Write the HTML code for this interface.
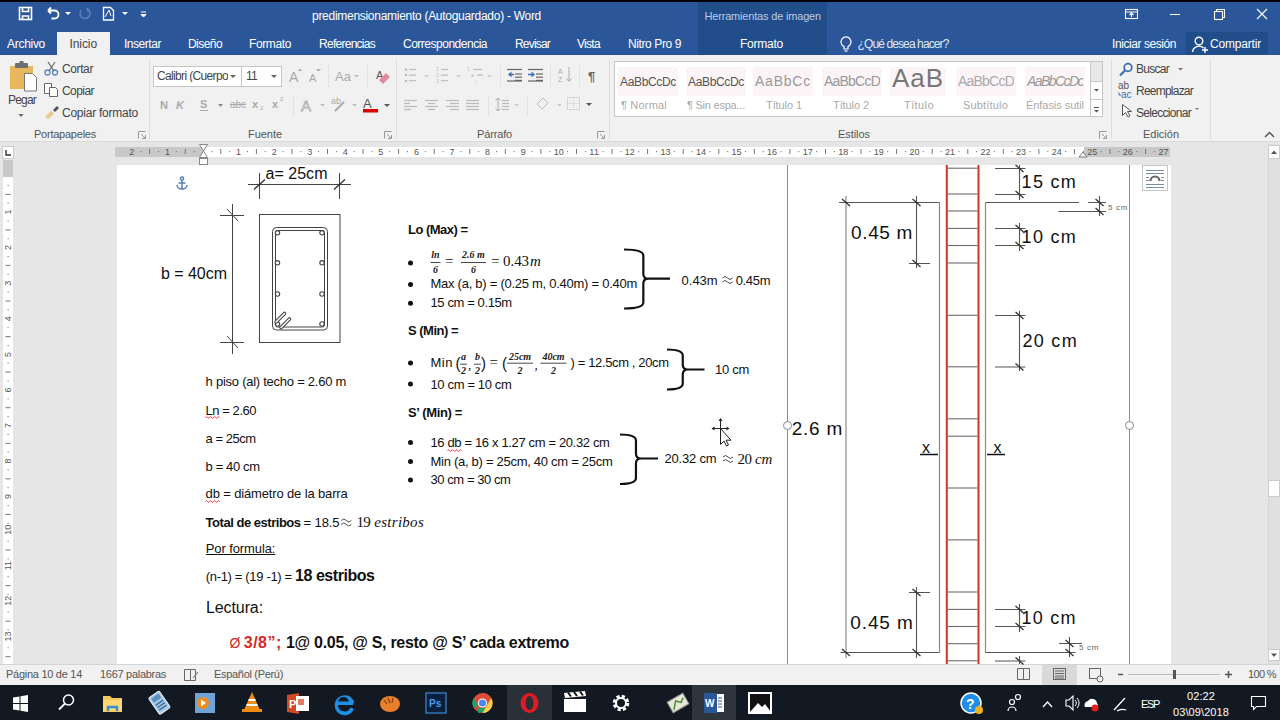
<!DOCTYPE html>
<html><head><meta charset="utf-8"><title>Word</title>
<style>
*{margin:0;padding:0;box-sizing:border-box}
html,body{width:1280px;height:720px;overflow:hidden;background:#e6e6e6;font-family:"Liberation Sans",sans-serif}
.a{position:absolute}
.t{position:absolute;white-space:pre}
svg{position:absolute;left:0;top:0}
</style></head><body>

<div class="a" style="left:0;top:0;width:1280px;height:2px;background:#000"></div>
<div class="a" style="left:0;top:2px;width:1280px;height:53px;background:#2b579a"></div>
<div class="a" style="left:698px;top:2px;width:129px;height:53px;background:#214d8b"></div>
<div class="a" style="left:1186px;top:32px;width:82px;height:23px;background:#214d8b"></div>
<div class="a" style="left:57px;top:32px;width:53px;height:23px;background:#f1f1f1"></div>
<div class="a" style="left:0;top:55px;width:1280px;height:87px;background:#f1f1f1;border-bottom:1px solid #dadada"></div>
<div class="a" style="left:117px;top:165px;width:1054px;height:499px;background:#fff"></div>
<div class="a" style="left:0;top:664px;width:1280px;height:21px;background:#f1f1f1;border-top:1px solid #d4d4d4"></div>
<div class="a" style="left:1042px;top:665px;width:35px;height:20px;background:#d9d9d9"></div>
<div class="a" style="left:0;top:685px;width:1280px;height:35px;background:#121922"></div>
<div class="a" style="left:507px;top:685px;width:45px;height:35px;background:#2a3038"></div>
<div class="a" style="left:692px;top:685px;width:44px;height:35px;background:#2f353d"></div>
<div class="a" style="left:149px;top:60px;width:1px;height:79px;background:#dcdcdc"></div>
<div class="a" style="left:396px;top:60px;width:1px;height:79px;background:#dcdcdc"></div>
<div class="a" style="left:608.5px;top:60px;width:1px;height:79px;background:#dcdcdc"></div>
<div class="a" style="left:1111px;top:60px;width:1px;height:79px;background:#dcdcdc"></div>
<div class="a" style="left:1210px;top:60px;width:1px;height:79px;background:#dcdcdc"></div>
<div class="a" style="left:153px;top:65.5px;width:89px;height:21px;background:#fff;border:1px solid #c6c6c6"></div>
<div class="a" style="left:241px;top:65.5px;width:41px;height:21px;background:#fff;border:1px solid #c6c6c6"></div>
<div class="a" style="left:328px;top:65px;width:1px;height:22px;background:#e2e2e2"></div>
<div class="a" style="left:367px;top:65px;width:1px;height:22px;background:#e2e2e2"></div>
<div class="a" style="left:293px;top:96px;width:1px;height:20px;background:#e2e2e2"></div>
<div class="a" style="left:500px;top:65px;width:1px;height:22px;background:#e2e2e2"></div>
<div class="a" style="left:549.5px;top:65px;width:1px;height:22px;background:#e2e2e2"></div>
<div class="a" style="left:579px;top:65px;width:1px;height:22px;background:#e2e2e2"></div>
<div class="a" style="left:488px;top:96px;width:1px;height:20px;background:#e2e2e2"></div>
<div class="a" style="left:527px;top:96px;width:1px;height:20px;background:#e2e2e2"></div>
<div class="a" style="left:614px;top:61px;width:489px;height:55.5px;background:#fff;border:1px solid #c6c6c6"></div>
<div class="a" style="left:1090px;top:61px;width:13px;height:55.5px;border:1px solid #c6c6c6;background:#fff"></div>
<div class="a" style="left:1091px;top:62px;width:11px;height:19px;background:#e8e8e8"></div>
<div class="a" style="left:1090px;top:80.5px;width:13px;height:1px;background:#c6c6c6"></div>
<div class="a" style="left:1090px;top:98.5px;width:13px;height:1px;background:#c6c6c6"></div>
<div class="a" style="left:617px;top:64px;width:66px;height:50px;background:#fff;"></div>
<div class="a" style="left:618px;top:67px;width:60px;height:29px;background:#fcf5f7"></div>
<div class="a" style="left:686px;top:67px;width:60px;height:29px;background:#fcf5f7"></div>
<div class="a" style="left:753px;top:67px;width:60px;height:29px;background:#fcf5f7"></div>
<div class="a" style="left:822px;top:67px;width:60px;height:29px;background:#fcf5f7"></div>
<div class="a" style="left:890px;top:67px;width:56px;height:29px;background:#fcf5f7"></div>
<div class="a" style="left:956px;top:67px;width:60px;height:29px;background:#fcf5f7"></div>
<div class="a" style="left:1025px;top:67px;width:60px;height:29px;background:#fcf5f7"></div>
<div class="a" style="left:115px;top:147px;width:1055px;height:10px;background:#fff"></div>
<div class="a" style="left:115px;top:147px;width:88px;height:10px;background:#c8c8c8"></div>
<div class="a" style="left:1084px;top:147px;width:86px;height:10px;background:#c8c8c8"></div>
<div class="a" style="left:2px;top:146px;width:12px;height:13px;background:#fff;border:1px solid #ccc"></div>
<div class="a" style="left:3px;top:160px;width:10px;height:504px;background:#fff"></div>
<div class="a" style="left:3px;top:160px;width:10px;height:17px;background:#c8c8c8"></div>
<div class="a" style="left:1268px;top:144px;width:12px;height:520px;background:#e0e0e0;border-left:1px solid #d6d6d6"></div>
<div class="a" style="left:1268px;top:145px;width:12px;height:14px;background:#fff;border:1px solid #ccc"></div>
<div class="a" style="left:1268px;top:480px;width:12px;height:17px;background:#fff;border:1px solid #ccc"></div>
<div class="a" style="left:1268px;top:649px;width:12px;height:12px;background:#fff;border:1px solid #ccc"></div>
<div class="a" style="left:1142px;top:165px;width:26px;height:26px;background:#fff;border:1px solid #c6c6c6"></div>
<svg width="1280" height="720" viewBox="0 0 1280 720">
<g fill="none" stroke="#fff" stroke-width="1.6"><rect x="19.5" y="7.5" width="12" height="12"/><path d="M22.5 7.5v4h6v-4M22.5 19.5v-3.5h6v3.5"/></g>
<path d="M48 10.5h6.5a4 4 0 0 1 0 8h-3M48 10.5l3-3M48 10.5l3 3" fill="none" stroke="#fff" stroke-width="1.8"/>
<path d="M65 12h6l-3 3z" fill="#fff"/>
<path d="M81.5 10a5 5 0 1 0 6.5-0.5" fill="none" stroke="#5a80b8" stroke-width="1.6"/><path d="M86 7.5l3.5 1.5-2 3z" fill="#5a80b8"/>
<path d="M103.5 7.5h7l3 3v9.5h-10z" fill="none" stroke="#fff" stroke-width="1.3"/><path d="M105 17l4-7 2 6" fill="none" stroke="#fff" stroke-width="1"/>
<path d="M122 12h6l-3 3z" fill="#fff"/>
<path d="M141 12h5M141 14.5h5l-2.5 2.5z" fill="#fff" stroke="#fff" stroke-width="1"/>
<g fill="none" stroke="#fff" stroke-width="1.1"><rect x="1125.5" y="9.5" width="12" height="9"/><path d="M1125.5 12h12M1131.5 17v-4M1129.5 15l2-2 2 2"/><path d="M1170 14.5h10"/><rect x="1214.5" y="11.5" width="8" height="8"/><path d="M1216.5 11.5v-2h8v8h-2"/><path d="M1257 9l10 10M1267 9l-10 10"/></g>
<g fill="none" stroke="#fff" stroke-width="1.2"><path d="M844 49v-2.5a5 5 0 1 1 4 0V49z"/><path d="M844.5 51h3"/></g>
<g fill="none" stroke="#fff" stroke-width="1.4"><circle cx="1199" cy="41" r="3.8"/><path d="M1192.5 52a6.5 6.5 0 0 1 11-4"/><path d="M1205 47v6M1202 50h6"/></g>
<g fill="none" stroke="#999" stroke-width="1"><path d="M138.5 138.5v-7h7"/><path d="M141 134l4 4M145.5 135v3.5h-3.5"/></g>
<g fill="none" stroke="#999" stroke-width="1"><path d="M384.5 138.5v-7h7"/><path d="M387 134l4 4M391.5 135v3.5h-3.5"/></g>
<g fill="none" stroke="#999" stroke-width="1"><path d="M597.5 138.5v-7h7"/><path d="M600 134l4 4M604.5 135v3.5h-3.5"/></g>
<g fill="none" stroke="#999" stroke-width="1"><path d="M1099.5 138.5v-7h7"/><path d="M1102 134l4 4M1106.5 135v3.5h-3.5"/></g>
<path d="M1265 137l4.5-4.5 4.5 4.5" fill="none" stroke="#555" stroke-width="1.5"/>
<rect x="10" y="66" width="23" height="23" fill="#e8b75c"/><rect x="15" y="63" width="13" height="5" rx="1" fill="#6f6f6f"/><rect x="19.5" y="61" width="4" height="3" fill="#6f6f6f"/>
<path d="M24.5 73.5h8l4 4v13.5h-12z" fill="#fff" stroke="#777" stroke-width="1"/>
<path d="M18.5 114h5l-2.5 3z" fill="#666"/>
<g fill="none" stroke="#5b87bd" stroke-width="1.3"><circle cx="47.5" cy="72.5" r="2.5"/><circle cx="55" cy="72.5" r="2.5"/></g><path d="M48 62l6 9M55 62l-6 9" stroke="#666" stroke-width="1.2"/>
<g fill="#fff" stroke="#666" stroke-width="1"><path d="M44.5 83.5h7v10h-7z"/><path d="M49.5 87.5h6l2 2v7h-8z"/></g>
<path d="M45 117l6-6 3 3-6 5z" fill="#e6cc88"/><path d="M53 110l4-4 2 2-4 4z" fill="#555"/>
<path d="M230 75h6l-3 3z M271 75h6l-3 3z" fill="#666"/>
<g fill="#aaa"><text x="289" y="82" font-family="Liberation Sans" font-size="14">A</text><text x="309" y="82" font-family="Liberation Sans" font-size="11">A</text><path d="M298 71l2-2.5 2 2.5z M316 69h5l-2.5 2.5z"/></g>
<text x="335" y="81" font-family="Liberation Sans" font-size="13" fill="#aaa">Aa</text><path d="M354 75h5l-2.5 2.5z" fill="#bbb"/>
<text x="376" y="79" font-family="Liberation Sans" font-size="11" fill="#555">A</text><path d="M379 80l7-7 4 4-7 7z" fill="#e48a9a"/>
<g font-family="Liberation Sans" font-weight="700" fill="#aaa"><text x="160" y="109" font-size="11">N</text><text x="176" y="109" font-size="11" font-style="italic">K</text><text x="200" y="108" font-size="11">S</text></g>
<path d="M200 110.5h8" stroke="#aaa" stroke-width="1"/><path d="M218 104h5l-2.5 3z" fill="#888"/>
<text x="230" y="108" font-family="Liberation Sans" font-size="10" fill="#aaa">abc</text><path d="M230 104.5h16" stroke="#aaa"/>
<text x="252" y="108" font-family="Liberation Sans" font-weight="700" font-size="11" fill="#aaa">x</text><text x="260" y="110" font-family="Liberation Sans" font-size="6" fill="#aaa">2</text>
<text x="272" y="108" font-family="Liberation Sans" font-weight="700" font-size="11" fill="#aaa">x</text><text x="280" y="101" font-family="Liberation Sans" font-size="6" fill="#aaa">2</text>
<text x="301" y="111" font-family="Liberation Sans" font-size="15" fill="none" stroke="#b0b0b0" stroke-width=".8">A</text><path d="M320 104h5l-2.5 2.5z" fill="#bbb"/>
<text x="331" y="104" font-family="Liberation Sans" font-size="9" fill="#aaa">ab</text><path d="M335 111l9-9" stroke="#aaa" stroke-width="2"/><path d="M352 104h5l-2.5 2.5z" fill="#bbb"/>
<text x="363" y="108" font-family="Liberation Sans" font-size="13" fill="#555">A</text><rect x="363" y="109" width="15" height="3.5" fill="#d00"/><path d="M384 104h6l-3 3z" fill="#555"/>
<g fill="#bbb"><circle cx="406" cy="69.5" r="1.3"/><circle cx="406" cy="75" r="1.3"/><circle cx="406" cy="81" r="1.3"/></g><path d="M409 69.5h7" stroke="#bbb" stroke-width="1.2"/><path d="M409 75.1h7" stroke="#bbb" stroke-width="1.2"/><path d="M409 80.7h7" stroke="#bbb" stroke-width="1.2"/>
<path d="M424 75h5l-2.5 2.5z" fill="#ccc"/>
<g font-family="Liberation Sans" font-size="5" fill="#bbb"><text x="436" y="71">1</text><text x="436" y="77">2</text><text x="436" y="82.5">3</text></g><path d="M441 69.5h7" stroke="#bbb" stroke-width="1.2"/><path d="M441 75.1h7" stroke="#bbb" stroke-width="1.2"/><path d="M441 80.7h7" stroke="#bbb" stroke-width="1.2"/>
<path d="M456 75h5l-2.5 2.5z" fill="#ccc"/>
<g font-family="Liberation Sans" font-size="5" fill="#bbb"><text x="467" y="71">1</text><text x="471" y="77">a</text><text x="475" y="82.5">i</text></g><path d="M473 69.5h9" stroke="#bbb" stroke-width="1.2"/><path d="M477 75.0h6" stroke="#bbb" stroke-width="1.2"/>
<path d="M487 75h5l-2.5 2.5z" fill="#ccc"/>
<path d="M507 69.5h15" stroke="#666" stroke-width="1.2"/><path d="M515 74.0h7" stroke="#666" stroke-width="1.2"/><path d="M515 77.2h7" stroke="#666" stroke-width="1.2"/><path d="M515 80.4h7" stroke="#666" stroke-width="1.2"/><path d="M507 81h15" stroke="#666" stroke-width="1.2"/><path d="M508 74.5l3.5-3v6z" fill="#3b6fb0"/><path d="M510 74.5h4" stroke="#3b6fb0" stroke-width="1.5"/>
<path d="M528 69.5h15" stroke="#666" stroke-width="1.2"/><path d="M536 74.0h7" stroke="#666" stroke-width="1.2"/><path d="M536 77.2h7" stroke="#666" stroke-width="1.2"/><path d="M536 80.4h7" stroke="#666" stroke-width="1.2"/><path d="M528 81h15" stroke="#666" stroke-width="1.2"/><path d="M535 74.5l-3.5-3v6z" fill="#3b6fb0"/><path d="M528 74.5h4" stroke="#3b6fb0" stroke-width="1.5"/>
<g font-family="Liberation Sans" font-size="7" fill="#aaa"><text x="558" y="74">A</text><text x="558" y="82">Z</text></g><path d="M569 67v14M566.5 78.5l2.5 3 2.5-3" fill="none" stroke="#aaa" stroke-width="1"/>
<text x="588" y="81" font-family="Liberation Sans" font-weight="700" font-size="13" fill="#666">¶</text>
<path d="M404 100.5h13" stroke="#bbb" stroke-width="1.2"/><path d="M404 103.5h6" stroke="#bbb" stroke-width="1.2"/><path d="M404 106.5h13" stroke="#bbb" stroke-width="1.2"/><path d="M404 109.5h7" stroke="#bbb" stroke-width="1.2"/>
<path d="M425 100.5h13" stroke="#bbb" stroke-width="1.2"/><path d="M428 103.5h7" stroke="#bbb" stroke-width="1.2"/><path d="M425 106.5h13" stroke="#bbb" stroke-width="1.2"/><path d="M428 109.5h7" stroke="#bbb" stroke-width="1.2"/>
<path d="M446 100.5h13" stroke="#bbb" stroke-width="1.2"/><path d="M450 103.5h9" stroke="#bbb" stroke-width="1.2"/><path d="M446 106.5h13" stroke="#bbb" stroke-width="1.2"/><path d="M450 109.5h9" stroke="#bbb" stroke-width="1.2"/>
<path d="M466 100.5h13" stroke="#bbb" stroke-width="1.2"/><path d="M466 103.5h13" stroke="#bbb" stroke-width="1.2"/><path d="M466 106.5h13" stroke="#bbb" stroke-width="1.2"/><path d="M466 109.5h13" stroke="#bbb" stroke-width="1.2"/>
<path d="M498 98v13M495.5 100.5l2.5-2.5 2.5 2.5M495.5 108.5l2.5 2.5 2.5-2.5" fill="none" stroke="#aaa" stroke-width="1"/><path d="M502 100.5h7" stroke="#bbb" stroke-width="1.2"/><path d="M502 103.5h7" stroke="#bbb" stroke-width="1.2"/><path d="M502 106.5h7" stroke="#bbb" stroke-width="1.2"/><path d="M502 109.5h7" stroke="#bbb" stroke-width="1.2"/>
<path d="M514 104h5l-2.5 2.5z" fill="#ccc"/>
<path d="M537 104l6-6 5 5-6 6z" fill="none" stroke="#bbb" stroke-width="1"/><path d="M557 104h5l-2.5 2.5z" fill="#ccc"/>
<rect x="567.5" y="97.5" width="12" height="12" fill="none" stroke="#bbb" stroke-dasharray="1 1"/><path d="M573.5 97.5v12M567.5 103.5h12" stroke="#ccc" stroke-dasharray="1 1"/><path d="M586 103h6l-3 3z" fill="#555"/>
<path d="M1094 89h5l-2.5 2.5z M1094 110h5l-2.5 2.5z" fill="#555"/><path d="M1094 107.5h5" stroke="#555"/>
<circle cx="1128" cy="67.5" r="3.8" fill="none" stroke="#3b6fb0" stroke-width="1.8"/><path d="M1125 70.5l-5 5" stroke="#3b6fb0" stroke-width="2.2"/>
<path d="M1178 68h5l-2.5 2.5z M1195 108h4l-2 2z" fill="#777"/>
<text x="1118" y="89" font-family="Liberation Sans" font-size="10" fill="#555">ab</text><text x="1121" y="97.5" font-family="Liberation Sans" font-size="10" fill="#3b6fb0">ac</text><path d="M1119 92.5v2.5h2" fill="none" stroke="#3b6fb0" stroke-width="1"/>
<path d="M1122.5 104.5v11l3-3 2.5 4.5 2-1-2.5-4.5h4z" fill="#fff" stroke="#555" stroke-width="1"/>
<rect x="140.3" y="151" width="1" height="1.2" fill="#777"/>
<path d="M149.6 149v5" stroke="#777" stroke-width="1"/>
<rect x="158.0" y="151" width="1" height="1.2" fill="#777"/>
<rect x="175.8" y="151" width="1" height="1.2" fill="#777"/>
<path d="M185.2 149v5" stroke="#777" stroke-width="1"/>
<rect x="193.6" y="151" width="1" height="1.2" fill="#777"/>
<rect x="211.4" y="151" width="1" height="1.2" fill="#777"/>
<path d="M220.8 149v5" stroke="#777" stroke-width="1"/>
<rect x="229.2" y="151" width="1" height="1.2" fill="#777"/>
<rect x="247.0" y="151" width="1" height="1.2" fill="#777"/>
<path d="M256.4 149v5" stroke="#777" stroke-width="1"/>
<rect x="264.7" y="151" width="1" height="1.2" fill="#777"/>
<rect x="282.5" y="151" width="1" height="1.2" fill="#777"/>
<path d="M291.9 149v5" stroke="#777" stroke-width="1"/>
<rect x="300.3" y="151" width="1" height="1.2" fill="#777"/>
<rect x="318.1" y="151" width="1" height="1.2" fill="#777"/>
<path d="M327.5 149v5" stroke="#777" stroke-width="1"/>
<rect x="335.9" y="151" width="1" height="1.2" fill="#777"/>
<rect x="353.7" y="151" width="1" height="1.2" fill="#777"/>
<path d="M363.1 149v5" stroke="#777" stroke-width="1"/>
<rect x="371.5" y="151" width="1" height="1.2" fill="#777"/>
<rect x="389.2" y="151" width="1" height="1.2" fill="#777"/>
<path d="M398.6 149v5" stroke="#777" stroke-width="1"/>
<rect x="407.0" y="151" width="1" height="1.2" fill="#777"/>
<rect x="424.8" y="151" width="1" height="1.2" fill="#777"/>
<path d="M434.2 149v5" stroke="#777" stroke-width="1"/>
<rect x="442.6" y="151" width="1" height="1.2" fill="#777"/>
<rect x="460.4" y="151" width="1" height="1.2" fill="#777"/>
<path d="M469.8 149v5" stroke="#777" stroke-width="1"/>
<rect x="478.2" y="151" width="1" height="1.2" fill="#777"/>
<rect x="496.0" y="151" width="1" height="1.2" fill="#777"/>
<path d="M505.3 149v5" stroke="#777" stroke-width="1"/>
<rect x="513.7" y="151" width="1" height="1.2" fill="#777"/>
<rect x="531.5" y="151" width="1" height="1.2" fill="#777"/>
<path d="M540.9 149v5" stroke="#777" stroke-width="1"/>
<rect x="549.3" y="151" width="1" height="1.2" fill="#777"/>
<rect x="567.1" y="151" width="1" height="1.2" fill="#777"/>
<path d="M576.5 149v5" stroke="#777" stroke-width="1"/>
<rect x="584.9" y="151" width="1" height="1.2" fill="#777"/>
<rect x="602.7" y="151" width="1" height="1.2" fill="#777"/>
<path d="M612.1 149v5" stroke="#777" stroke-width="1"/>
<rect x="620.4" y="151" width="1" height="1.2" fill="#777"/>
<rect x="638.2" y="151" width="1" height="1.2" fill="#777"/>
<path d="M647.6 149v5" stroke="#777" stroke-width="1"/>
<rect x="656.0" y="151" width="1" height="1.2" fill="#777"/>
<rect x="673.8" y="151" width="1" height="1.2" fill="#777"/>
<path d="M683.2 149v5" stroke="#777" stroke-width="1"/>
<rect x="691.6" y="151" width="1" height="1.2" fill="#777"/>
<rect x="709.4" y="151" width="1" height="1.2" fill="#777"/>
<path d="M718.8 149v5" stroke="#777" stroke-width="1"/>
<rect x="727.2" y="151" width="1" height="1.2" fill="#777"/>
<rect x="744.9" y="151" width="1" height="1.2" fill="#777"/>
<path d="M754.3 149v5" stroke="#777" stroke-width="1"/>
<rect x="762.7" y="151" width="1" height="1.2" fill="#777"/>
<rect x="780.5" y="151" width="1" height="1.2" fill="#777"/>
<path d="M789.9 149v5" stroke="#777" stroke-width="1"/>
<rect x="798.3" y="151" width="1" height="1.2" fill="#777"/>
<rect x="816.1" y="151" width="1" height="1.2" fill="#777"/>
<path d="M825.5 149v5" stroke="#777" stroke-width="1"/>
<rect x="833.9" y="151" width="1" height="1.2" fill="#777"/>
<rect x="851.7" y="151" width="1" height="1.2" fill="#777"/>
<path d="M861.0 149v5" stroke="#777" stroke-width="1"/>
<rect x="869.4" y="151" width="1" height="1.2" fill="#777"/>
<rect x="887.2" y="151" width="1" height="1.2" fill="#777"/>
<path d="M896.6 149v5" stroke="#777" stroke-width="1"/>
<rect x="905.0" y="151" width="1" height="1.2" fill="#777"/>
<rect x="922.8" y="151" width="1" height="1.2" fill="#777"/>
<path d="M932.2 149v5" stroke="#777" stroke-width="1"/>
<rect x="940.6" y="151" width="1" height="1.2" fill="#777"/>
<rect x="958.4" y="151" width="1" height="1.2" fill="#777"/>
<path d="M967.8 149v5" stroke="#777" stroke-width="1"/>
<rect x="976.1" y="151" width="1" height="1.2" fill="#777"/>
<rect x="993.9" y="151" width="1" height="1.2" fill="#777"/>
<path d="M1003.3 149v5" stroke="#777" stroke-width="1"/>
<rect x="1011.7" y="151" width="1" height="1.2" fill="#777"/>
<rect x="1029.5" y="151" width="1" height="1.2" fill="#777"/>
<path d="M1038.9 149v5" stroke="#777" stroke-width="1"/>
<rect x="1047.3" y="151" width="1" height="1.2" fill="#777"/>
<rect x="1065.1" y="151" width="1" height="1.2" fill="#777"/>
<path d="M1074.5 149v5" stroke="#777" stroke-width="1"/>
<rect x="1082.9" y="151" width="1" height="1.2" fill="#777"/>
<rect x="1100.6" y="151" width="1" height="1.2" fill="#777"/>
<path d="M1110.0 149v5" stroke="#777" stroke-width="1"/>
<rect x="1118.4" y="151" width="1" height="1.2" fill="#777"/>
<rect x="1136.2" y="151" width="1" height="1.2" fill="#777"/>
<path d="M1145.6 149v5" stroke="#777" stroke-width="1"/>
<rect x="1154.0" y="151" width="1" height="1.2" fill="#777"/>
<path d="M199.5 144.5h8l-4 6.5 4 6.5h-8l4-6.5z" fill="#fff" stroke="#888" stroke-width="1"/><rect x="199.5" y="158.5" width="8" height="6" fill="#fff" stroke="#888"/>
<path d="M1079 157l4-5 4 5z" fill="#fff" stroke="#777" stroke-width="1"/>
<path d="M6 150v5h5" fill="none" stroke="#333" stroke-width="1.4"/>
<rect x="7.5" y="184.9" width="1.2" height="1" fill="#777"/>
<path d="M5.5 194.3h5" stroke="#777" stroke-width="1"/>
<rect x="7.5" y="202.7" width="1.2" height="1" fill="#777"/>
<rect x="7.5" y="220.5" width="1.2" height="1" fill="#777"/>
<path d="M5.5 229.9h5" stroke="#777" stroke-width="1"/>
<rect x="7.5" y="238.2" width="1.2" height="1" fill="#777"/>
<text x="0" y="0" transform="translate(11 214.6) rotate(-90)" font-family="Liberation Sans" font-size="9" fill="#555">1</text>
<rect x="7.5" y="256.0" width="1.2" height="1" fill="#777"/>
<path d="M5.5 265.4h5" stroke="#777" stroke-width="1"/>
<rect x="7.5" y="273.8" width="1.2" height="1" fill="#777"/>
<text x="0" y="0" transform="translate(11 250.1) rotate(-90)" font-family="Liberation Sans" font-size="9" fill="#555">2</text>
<rect x="7.5" y="291.6" width="1.2" height="1" fill="#777"/>
<path d="M5.5 301.0h5" stroke="#777" stroke-width="1"/>
<rect x="7.5" y="309.4" width="1.2" height="1" fill="#777"/>
<text x="0" y="0" transform="translate(11 285.7) rotate(-90)" font-family="Liberation Sans" font-size="9" fill="#555">3</text>
<rect x="7.5" y="327.2" width="1.2" height="1" fill="#777"/>
<path d="M5.5 336.6h5" stroke="#777" stroke-width="1"/>
<rect x="7.5" y="345.0" width="1.2" height="1" fill="#777"/>
<text x="0" y="0" transform="translate(11 321.3) rotate(-90)" font-family="Liberation Sans" font-size="9" fill="#555">4</text>
<rect x="7.5" y="362.7" width="1.2" height="1" fill="#777"/>
<path d="M5.5 372.1h5" stroke="#777" stroke-width="1"/>
<rect x="7.5" y="380.5" width="1.2" height="1" fill="#777"/>
<text x="0" y="0" transform="translate(11 356.9) rotate(-90)" font-family="Liberation Sans" font-size="9" fill="#555">5</text>
<rect x="7.5" y="398.3" width="1.2" height="1" fill="#777"/>
<path d="M5.5 407.7h5" stroke="#777" stroke-width="1"/>
<rect x="7.5" y="416.1" width="1.2" height="1" fill="#777"/>
<text x="0" y="0" transform="translate(11 392.4) rotate(-90)" font-family="Liberation Sans" font-size="9" fill="#555">6</text>
<rect x="7.5" y="433.9" width="1.2" height="1" fill="#777"/>
<path d="M5.5 443.3h5" stroke="#777" stroke-width="1"/>
<rect x="7.5" y="451.7" width="1.2" height="1" fill="#777"/>
<text x="0" y="0" transform="translate(11 428.0) rotate(-90)" font-family="Liberation Sans" font-size="9" fill="#555">7</text>
<rect x="7.5" y="469.5" width="1.2" height="1" fill="#777"/>
<path d="M5.5 478.8h5" stroke="#777" stroke-width="1"/>
<rect x="7.5" y="487.2" width="1.2" height="1" fill="#777"/>
<text x="0" y="0" transform="translate(11 463.6) rotate(-90)" font-family="Liberation Sans" font-size="9" fill="#555">8</text>
<rect x="7.5" y="505.0" width="1.2" height="1" fill="#777"/>
<path d="M5.5 514.4h5" stroke="#777" stroke-width="1"/>
<rect x="7.5" y="522.8" width="1.2" height="1" fill="#777"/>
<text x="0" y="0" transform="translate(11 499.1) rotate(-90)" font-family="Liberation Sans" font-size="9" fill="#555">9</text>
<rect x="7.5" y="540.6" width="1.2" height="1" fill="#777"/>
<path d="M5.5 550.0h5" stroke="#777" stroke-width="1"/>
<rect x="7.5" y="558.4" width="1.2" height="1" fill="#777"/>
<text x="0" y="0" transform="translate(11 534.7) rotate(-90)" font-family="Liberation Sans" font-size="9" fill="#555">10</text>
<rect x="7.5" y="576.2" width="1.2" height="1" fill="#777"/>
<path d="M5.5 585.6h5" stroke="#777" stroke-width="1"/>
<rect x="7.5" y="593.9" width="1.2" height="1" fill="#777"/>
<text x="0" y="0" transform="translate(11 570.3) rotate(-90)" font-family="Liberation Sans" font-size="9" fill="#555">11</text>
<rect x="7.5" y="611.7" width="1.2" height="1" fill="#777"/>
<path d="M5.5 621.1h5" stroke="#777" stroke-width="1"/>
<rect x="7.5" y="629.5" width="1.2" height="1" fill="#777"/>
<text x="0" y="0" transform="translate(11 605.8) rotate(-90)" font-family="Liberation Sans" font-size="9" fill="#555">12</text>
<rect x="7.5" y="647.3" width="1.2" height="1" fill="#777"/>
<path d="M5.5 656.7h5" stroke="#777" stroke-width="1"/>
<text x="0" y="0" transform="translate(11 641.4) rotate(-90)" font-family="Liberation Sans" font-size="9" fill="#555">13</text>
<path d="M1271 154l3-3.5 3 3.5z M1271 653.5h6l-3 3.5z" fill="#555"/>
<path d="M184.5 669.5v11h6v-11zM190.5 669.5h5v11h-5" fill="none" stroke="#666" stroke-width="1"/><path d="M193 678l5-6" stroke="#666"/>
<g fill="none" stroke="#666" stroke-width="1"><path d="M1017.5 668.5h6v11h-6zM1023.5 668.5h6v11h-6z"/></g>
<g fill="none" stroke="#666" stroke-width="1"><rect x="1053.5" y="668.5" width="12" height="11"/><path d="M1055 671h9M1055 673.5h9M1055 676h9M1055 678h9"/></g>
<g fill="none" stroke="#666" stroke-width="1"><rect x="1089.5" y="668.5" width="11" height="10"/><circle cx="1100" cy="679" r="3" fill="#f1f1f1"/></g>
<path d="M1118 674.5h5M1225 674.5h7M1228.5 671v7" stroke="#555" stroke-width="1.5"/><path d="M1128 674.5h92" stroke="#bbb" stroke-width="1"/><rect x="1173" y="670" width="3" height="9" fill="#555"/>
<g fill="#fff"><path d="M13 697.5l6.5-1v6.5H13z M20.5 696.3L28 695v8h-7.5z M13 704h6.5v6.5L13 709.5z M20.5 704H28v8l-7.5-1.2z"/></g>
<circle cx="68.5" cy="700" r="5" fill="none" stroke="#fff" stroke-width="1.5"/><path d="M65 703.5l-6 6" stroke="#fff" stroke-width="1.8"/>
<path d="M103 696h7l2 2h10v14h-19z" fill="#f5c85a"/><rect x="103" y="700" width="19" height="11" fill="#ffd874"/><path d="M108 711v-4h9v4" fill="none" stroke="#3390d8" stroke-width="2.5"/>
<g transform="rotate(-35 159 703)"><rect x="153" y="693" width="13" height="20" rx="1.5" fill="#a9c9e6" stroke="#e6f0fa"/><rect x="155" y="695" width="9" height="5" fill="#5b8fbf"/><path d="M155 703h9M155 706h9M155 709h9" stroke="#3d6d9a" stroke-width="1.5"/></g>
<rect x="195" y="693" width="20" height="20" fill="#6fa3d6"/><circle cx="203" cy="703" r="6" fill="#f08c1e"/><path d="M201 699.5v7l5-3.5z" fill="#fff"/>
<path d="M252 692l-8 18h16z" fill="#f08c10"/><path d="M248.5 700h7M246.5 705h11" stroke="#fff" stroke-width="2.2"/><rect x="242" y="709" width="20" height="3" fill="#f08c10"/>
<path d="M287 695l12-2v21l-12-2z" fill="#d04a28"/><rect x="296" y="696" width="13" height="15" fill="#fff"/><rect x="298" y="699" width="6" height="6" fill="#e07b5c"/><text x="289" y="708" font-family="Liberation Sans" font-weight="700" font-size="11" fill="#fff">P</text>
<path d="M353 705h-15a6.5 6.5 0 0 0 12.5 2.5l3.5 1.5a10 10 0 1 1 0-7.5zM338.3 701.5h10.5a5.3 5.3 0 0 0-10.5 0z" fill="#1e8fe8" fill-rule="evenodd"/>
<ellipse cx="390" cy="704" rx="10" ry="8" fill="#e8802a"/><path d="M384 700l3 4M388 698l2 5M393 698l-1 5" stroke="#8a3b08" stroke-width="1.2"/>
<rect x="426" y="693" width="20" height="20" fill="#0b1f3d" stroke="#3a8ad8" stroke-width="1.2"/><text x="429" y="707" font-family="Liberation Sans" font-weight="700" font-size="10" fill="#45a0f0">Ps</text>
<circle cx="482.5" cy="703" r="10" fill="#dd4b39"/><path d="M482.5 693a10 10 0 0 1 8.7 5H482.5z" fill="#dd4b39"/><path d="M473.8 698l4.4 7.5-4.4 2.5a10 10 0 0 1 0-10z" fill="#1da462"/><path d="M478 708l4.5-0.1 4 0a10 10 0 0 1-8.5 5z" fill="#1da462"/><path d="M491.2 698a10 10 0 0 1-8.7 15l4.4-7.5z" fill="#ffcd46"/><circle cx="482.5" cy="703" r="4.6" fill="#fff"/><circle cx="482.5" cy="703" r="3.6" fill="#4a8af4"/>
<ellipse cx="529.5" cy="703" rx="9" ry="10" fill="#e01b24"/><ellipse cx="529.5" cy="703" rx="4" ry="7" fill="#2a3038"/>
<rect x="564" y="699" width="22" height="13" fill="#fff"/><path d="M564 693l21-2 1 5-21 2z" fill="#fff"/><path d="M568 692.5l3 4M574 692l3 4M580 691.5l3 4" stroke="#111" stroke-width="2"/>
<circle cx="621" cy="703" r="6.5" fill="none" stroke="#fff" stroke-width="3.5" stroke-dasharray="3 2.1"/><circle cx="621" cy="703" r="5" fill="none" stroke="#fff" stroke-width="2"/>
<g transform="rotate(-30 678 703)"><rect x="669" y="697" width="18" height="12" fill="#e8e8d8" stroke="#999"/><path d="M671 707l6-7 4 4 4-3" fill="none" stroke="#4a8a30" stroke-width="1.5"/></g>
<rect x="704" y="694" width="20" height="18" fill="#fff"/><rect x="704" y="693" width="13" height="20" fill="#2b5797"/><text x="705" y="707" font-family="Liberation Sans" font-weight="700" font-size="10" fill="#fff">W</text><path d="M718 698h4M718 701h4M718 704h4M718 707h4" stroke="#2b5797"/>
<rect x="749" y="693" width="22" height="20" fill="#111" stroke="#fff" stroke-width="2"/><path d="M750 712l8-9 4 4 3-3 6 8z" fill="#fff"/>
<circle cx="971" cy="703" r="10" fill="#1e8fe8" stroke="#fff" stroke-width="1.5"/><text x="966" y="709" font-family="Liberation Sans" font-weight="700" font-size="14" fill="#fff">?</text><circle cx="979" cy="710" r="4" fill="#f0b020"/>
<g fill="none" stroke="#fff" stroke-width="1.2"><circle cx="1012" cy="702" r="2.5"/><path d="M1008 711a4 4 0 0 1 8 0"/><circle cx="1018" cy="697" r="2.5"/><path d="M1014.5 705"/></g>
<path d="M1043 707l4.5-5 4.5 5" fill="none" stroke="#fff" stroke-width="1.3"/>
<path d="M1066 700h3l4-4v14l-4-4h-3z" fill="none" stroke="#fff" stroke-width="1.1"/><path d="M1075 700a4 4 0 0 1 0 6M1077 698a7 7 0 0 1 0 10" fill="none" stroke="#fff" stroke-width="1"/>
<path d="M1085 707a4 4 0 0 1 3-6 5 5 0 0 1 9 2 3 3 0 0 1 0 4z" fill="#fff"/><circle cx="1095" cy="708" r="3.5" fill="#e02020"/>
<path d="M1114 710l11-12M1117 711c3-2 6-2 9-1" fill="none" stroke="#fff" stroke-width="1.3"/>
<path d="M1251.5 696.5h14v10h-9l-3 3v-3h-2z" fill="none" stroke="#fff" stroke-width="1.1"/>
<g fill="none" stroke="#5b7fb5" stroke-width="1.5"><circle cx="182" cy="178.5" r="1.6"/><path d="M182 180v9M178.5 183h7M177 185a5 4 0 0 0 10 0"/></g>
<g fill="none" stroke="#444" stroke-width="1"><path d="M248 184.5h103"/><path d="M259.5 173v26M339.5 173v26"/><path d="M254 189.5l11-10M334 189.5l11-10" stroke="#333" stroke-width="1.3"/><path d="M232.5 204v150"/><path d="M220 215.5h24M220 342.5h24"/><path d="M227 209l11 12M227 336l11 12"/><rect x="259.5" y="214.5" width="80.5" height="128"/><rect x="272.5" y="227.5" width="55" height="102.5" rx="4"/><rect x="275.5" y="230.5" width="49" height="96.5" rx="2"/></g>
<g fill="#fff" stroke="#444" stroke-width="1.1"><circle cx="277.5" cy="232.8" r="2.2"/><circle cx="277.5" cy="262.8" r="2.2"/><circle cx="277.5" cy="294" r="2.2"/><circle cx="277.5" cy="324" r="2.2"/><circle cx="322" cy="232.8" r="2.2"/><circle cx="322" cy="262.8" r="2.2"/><circle cx="322" cy="294" r="2.2"/><circle cx="322" cy="324" r="2.2"/></g>
<path d="M276 322L284.5 313.5M281 327.5L289.5 319" stroke="#444" stroke-width="3.6" stroke-linecap="round"/><path d="M276 322L284.5 313.5M281 327.5L289.5 319" stroke="#fff" stroke-width="1.5" stroke-linecap="round"/>
<path d="M205.5 417.5q1 -1.5 2 0t2 0t2 0t2 0t2 0t2 0t2 0" fill="none" stroke="#e00" stroke-width=".8"/>
<path d="M205.5 501.5q1 -1.5 2 0t2 0t2 0t2 0t2 0t2 0t2 0" fill="none" stroke="#e00" stroke-width=".8"/>
<path d="M341.3 520.5q2.5 -3 5.0 0t5.0 0M341.3 524.5q2.5 -3 5.0 0t5.0 0" fill="none" stroke="#333" stroke-width=".9"/>
<circle cx="410.5" cy="263" r="2.5" fill="#111"/>
<circle cx="410.5" cy="284.4" r="2.5" fill="#111"/>
<circle cx="410.5" cy="303.2" r="2.5" fill="#111"/>
<circle cx="410.5" cy="363" r="2.5" fill="#111"/>
<circle cx="410.5" cy="384" r="2.5" fill="#111"/>
<circle cx="410.5" cy="442.6" r="2.5" fill="#111"/>
<circle cx="410.5" cy="461.4" r="2.5" fill="#111"/>
<circle cx="410.5" cy="480" r="2.5" fill="#111"/>
<g font-family="Liberation Serif" font-style="italic" font-weight="700" fill="#222" text-anchor="middle"><text x="435.5" y="258" font-size="10">ln</text><text x="435.5" y="273.3" font-size="10">6</text></g><path d="M430.5 262.5h10" stroke="#333" stroke-width=".9"/>
<g font-family="Liberation Serif" font-style="italic" font-weight="700" fill="#222" text-anchor="middle"><text x="473.5" y="258" font-size="10">2.6 m</text><text x="473.5" y="273.3" font-size="10">6</text></g><path d="M461.0 262.5h25" stroke="#333" stroke-width=".9"/>
<g font-family="Liberation Serif" font-style="italic" font-weight="700" fill="#222" text-anchor="middle"><text x="463.5" y="359.6" font-size="10">a</text><text x="463.5" y="374.3" font-size="10">2</text></g><path d="M460.0 364.2h7" stroke="#333" stroke-width=".9"/>
<g font-family="Liberation Serif" font-style="italic" font-weight="700" fill="#222" text-anchor="middle"><text x="477.5" y="359.6" font-size="10">b</text><text x="477.5" y="374.3" font-size="10">2</text></g><path d="M474.0 364.2h7" stroke="#333" stroke-width=".9"/>
<g font-family="Liberation Serif" font-style="italic" font-weight="700" fill="#222" text-anchor="middle"><text x="520" y="359.6" font-size="10">25cm</text><text x="520" y="374.3" font-size="10">2</text></g><path d="M507.0 363.2h26" stroke="#333" stroke-width=".9"/>
<g font-family="Liberation Serif" font-style="italic" font-weight="700" fill="#222" text-anchor="middle"><text x="553.5" y="359.6" font-size="10">40cm</text><text x="553.5" y="374.3" font-size="10">2</text></g><path d="M540.5 363.2h26" stroke="#333" stroke-width=".9"/>
<path d="M447.5 450.5q1 -1.5 2 0t2 0t2 0t2 0t2 0t2 0t2 0" fill="none" stroke="#e00" stroke-width=".8"/>
<path d="M624 249.5q19.32000000000005 0 19.32000000000005 6V273.7q0 5 5 5H670M648.32 278.7q-5 0 -5 5V302.5q0 6 -19.32000000000005 6" fill="none" stroke="#111" stroke-width="2.2"/>
<path d="M667 349.5q15.75 0 15.75 6V364.5q0 5 5 5H704.5M687.75 369.5q-5 0 -5 5V383.5q0 6 -15.75 6" fill="none" stroke="#111" stroke-width="2.2"/>
<path d="M620 434.5q15.960000000000036 0 15.960000000000036 6V453.5q0 5 5 5H658M640.96 458.5q-5 0 -5 5V478q0 6 -15.960000000000036 6" fill="none" stroke="#111" stroke-width="2.2"/>
<path d="M722.5 278.0q2.5 -3 5.0 0t5.0 0M722.5 282.0q2.5 -3 5.0 0t5.0 0" fill="none" stroke="#333" stroke-width=".9"/>
<path d="M723 457.0q2.5 -3 5.0 0t5.0 0M723 461.0q2.5 -3 5.0 0t5.0 0" fill="none" stroke="#333" stroke-width=".9"/>
<g stroke="#222" stroke-width="1" fill="none"><path d="M720.5 419v18M712 428.5h17"/></g><path d="M718.5 421l2-3 2 3zM714.5 426.5l-3 2 3 2zM726.5 426.5l3 2-3 2z" fill="#222"/><path d="M720.5 428.5v16l3.5-3.5 2.5 5 2-1-2.5-4.8h5z" fill="#fff" stroke="#222" stroke-width="1"/>
<g fill="none" stroke="#8c8c8c" stroke-width="1"><path d="M787.5 165v499M1129.5 165v499"/></g>
<g fill="#fff" stroke="#888" stroke-width="1"><circle cx="787.5" cy="425.5" r="4"/><circle cx="1129.5" cy="425.5" r="4"/></g>
<path d="M846 196v462M939.5 202.5V652.5M985.5 202.5V652.5" fill="none" stroke="#8a8a8a" stroke-width="1.2"/>
<g fill="none" stroke="#555" stroke-width="1.1"><path d="M839 202.5h100.5M985.5 202.5h93.5M1058.5 211.5h47.5M1088 202.5h18"/><path d="M840.5 652.5h99M985.5 652.5h90M1059 643.5h23"/><path d="M916.5 196v72M909 263.5h21M916.5 587v71M909 592.5h21"/><path d="M995 168.5h30.5M995 194.5h30.5M1019.5 165v35"/><path d="M995 228.5h30.5M995 245.5h30.5M1019.5 223v28"/><path d="M995 315.5h30.5M995 367h30.5M1019.5 311v60"/><path d="M995 609.5h30.5M995 626.5h30.5M1019.5 604v28"/><path d="M995 661h30.5M1019.5 656v8"/><path d="M1099.5 196v20M1069.5 637v20"/></g>
<g stroke="#333" stroke-width="1.3"><path d="M842 199.0l8 7"/><path d="M912.5 199.0l8 7"/><path d="M912.5 260.0l8 7"/><path d="M1015.5 165.0l8 7"/><path d="M1015.5 191.0l8 7"/><path d="M1015.5 225.0l8 7"/><path d="M1015.5 242.0l8 7"/><path d="M1015.5 312.0l8 7"/><path d="M1015.5 363.5l8 7"/><path d="M1015.5 606.0l8 7"/><path d="M1015.5 623.0l8 7"/><path d="M1015.5 657.5l8 7"/><path d="M1095.5 199.0l8 7"/><path d="M1095.5 208.0l8 7"/><path d="M912.5 589.0l8 7"/><path d="M912.5 649.0l8 7"/><path d="M842 649.0l8 7"/><path d="M1065.5 640.0l8 7"/><path d="M1065.5 649.0l8 7"/></g>
<path d="M946.8 165v499M978.5 165v499" stroke="#d03228" stroke-width="2"/>
<g stroke="#6a6a6a" stroke-width="1.1"><path d="M948 168.2h29.5"/><path d="M948 194h29.5"/><path d="M948 211h29.5"/><path d="M948 228.4h29.5"/><path d="M948 245.5h29.5"/><path d="M948 263h29.5"/><path d="M948 315.3h29.5"/><path d="M948 366.8h29.5"/><path d="M948 418.8h29.5"/><path d="M948 436.2h29.5"/><path d="M948 488h29.5"/><path d="M948 539.9h29.5"/><path d="M948 592h29.5"/><path d="M948 609.4h29.5"/><path d="M948 626.5h29.5"/><path d="M948 643.7h29.5"/><path d="M948 660.8h29.5"/></g>
<path d="M920 454.5h18M987 454.5h18" stroke="#111" stroke-width="1.5"/>
<g stroke="#7a8ea8" stroke-width="1"><path d="M1146 170.5h18M1146 173.5h18M1146 184.5h18M1146 187.5h18M1146 177.5h3M1161 177.5h3M1146 180.5h3M1161 180.5h3"/></g><path d="M1150.5 181a4.5 4.5 0 0 1 9 0" fill="none" stroke="#666" stroke-width="2.2"/>
</svg>
<div class="t" style="left:312px;top:9.84px;font-size:12px;line-height:12px;color:#ffffff;letter-spacing:-0.282px;">predimensionamiento (Autoguardado) - Word</div>
<div class="t" style="left:704.5px;top:10.69px;font-size:11px;line-height:11px;color:#b9cbe6;letter-spacing:-0.180px;">Herramientas de imagen</div>
<div class="t" style="left:7px;top:37.84px;font-size:12px;line-height:12px;color:#ffffff;letter-spacing:-0.288px;">Archivo</div>
<div class="t" style="left:124px;top:37.84px;font-size:12px;line-height:12px;color:#ffffff;letter-spacing:-0.461px;">Insertar</div>
<div class="t" style="left:188px;top:37.84px;font-size:12px;line-height:12px;color:#ffffff;letter-spacing:-0.560px;">Diseño</div>
<div class="t" style="left:249px;top:37.84px;font-size:12px;line-height:12px;color:#ffffff;letter-spacing:-0.384px;">Formato</div>
<div class="t" style="left:319px;top:37.84px;font-size:12px;line-height:12px;color:#ffffff;letter-spacing:-0.730px;">Referencias</div>
<div class="t" style="left:403px;top:37.84px;font-size:12px;line-height:12px;color:#ffffff;letter-spacing:-0.493px;">Correspondencia</div>
<div class="t" style="left:515px;top:37.84px;font-size:12px;line-height:12px;color:#ffffff;letter-spacing:-0.812px;">Revisar</div>
<div class="t" style="left:577px;top:37.84px;font-size:12px;line-height:12px;color:#ffffff;letter-spacing:-0.694px;">Vista</div>
<div class="t" style="left:628px;top:37.84px;font-size:12px;line-height:12px;color:#ffffff;letter-spacing:-0.396px;">Nitro Pro 9</div>
<div class="t" style="left:740px;top:37.84px;font-size:12px;line-height:12px;color:#ffffff;letter-spacing:-0.241px;">Formato</div>
<div class="t" style="left:1112px;top:37.84px;font-size:12px;line-height:12px;color:#ffffff;letter-spacing:-0.431px;">Iniciar sesión</div>
<div class="t" style="left:1210px;top:37.84px;font-size:12px;line-height:12px;color:#ffffff;letter-spacing:-0.188px;">Compartir</div>
<div class="t" style="left:69.5px;top:37.84px;font-size:12px;line-height:12px;color:#444;letter-spacing:-0.086px;">Inicio</div>
<div class="t" style="left:857.5px;top:37.84px;font-size:12px;line-height:12px;color:#dfe8f4;letter-spacing:-0.887px;">¿Qué desea hacer?</div>
<div class="t" style="left:34px;top:128.69px;font-size:11px;line-height:11px;color:#555;letter-spacing:-0.236px;">Portapapeles</div>
<div class="t" style="left:248px;top:128.69px;font-size:11px;line-height:11px;color:#555;letter-spacing:-0.042px;">Fuente</div>
<div class="t" style="left:477px;top:128.69px;font-size:11px;line-height:11px;color:#555;letter-spacing:-0.154px;">Párrafo</div>
<div class="t" style="left:838px;top:128.69px;font-size:11px;line-height:11px;color:#555;letter-spacing:-0.058px;">Estilos</div>
<div class="t" style="left:1143px;top:128.69px;font-size:11px;line-height:11px;color:#555;letter-spacing:-0.011px;">Edición</div>
<div class="t" style="left:8px;top:93.84px;font-size:12px;line-height:12px;color:#444444;letter-spacing:-0.806px;">Pegar</div>
<div class="t" style="left:62px;top:62.84px;font-size:12px;line-height:12px;color:#444444;letter-spacing:-0.391px;">Cortar</div>
<div class="t" style="left:62px;top:84.84px;font-size:12px;line-height:12px;color:#444444;letter-spacing:-0.560px;">Copiar</div>
<div class="t" style="left:62px;top:106.84px;font-size:12px;line-height:12px;color:#444444;letter-spacing:-0.241px;">Copiar formato</div>
<div class="t" style="left:157px;top:69.84px;font-size:12px;line-height:12px;color:#444444;letter-spacing:-0.647px;overflow:hidden;width:71px;">Calibri (Cuerpo</div>
<div class="t" style="left:246px;top:69.84px;font-size:12px;line-height:12px;color:#444444;letter-spacing:-0.734px;">11</div>
<div class="t" style="left:620px;top:75.84px;font-size:12px;line-height:12px;color:#555;letter-spacing:-0.336px;overflow:hidden;">AaBbCcDc</div>
<div class="t" style="left:621px;top:99.69px;font-size:11px;line-height:11px;color:#aaa;letter-spacing:0.197px;">¶ Normal</div>
<div class="t" style="left:688px;top:75.84px;font-size:12px;line-height:12px;color:#555;letter-spacing:-0.336px;overflow:hidden;">AaBbCcDc</div>
<div class="t" style="left:687px;top:99.69px;font-size:11px;line-height:11px;color:#aaa;letter-spacing:-0.227px;">¶ Sin espa...</div>
<div class="t" style="left:755px;top:74.15px;font-size:14px;line-height:14px;color:#999;letter-spacing:0.773px;overflow:hidden;">AaBbCc</div>
<div class="t" style="left:766px;top:99.69px;font-size:11px;line-height:11px;color:#aaa;letter-spacing:-0.086px;">Título 1</div>
<div class="t" style="left:824px;top:74.15px;font-size:14px;line-height:14px;color:#999;letter-spacing:-0.781px;overflow:hidden;">AaBbCcD</div>
<div class="t" style="left:833px;top:99.69px;font-size:11px;line-height:11px;color:#aaa;letter-spacing:-0.086px;">Título 2</div>
<div class="t" style="left:892px;top:65.49px;font-size:26px;line-height:26px;color:#777;letter-spacing:0.948px;overflow:hidden;">AaB</div>
<div class="t" style="left:904px;top:99.69px;font-size:11px;line-height:11px;color:#aaa;letter-spacing:0.414px;">Título</div>
<div class="t" style="left:958px;top:74.15px;font-size:14px;line-height:14px;color:#aaa;letter-spacing:-0.781px;overflow:hidden;">AaBbCcD</div>
<div class="t" style="left:963px;top:99.69px;font-size:11px;line-height:11px;color:#aaa;letter-spacing:0.175px;">Subtítulo</div>
<div class="t" style="left:1027px;top:74.15px;font-size:14px;line-height:14px;color:#999;font-style:italic;letter-spacing:-1.559px;overflow:hidden;">AaBbCcDc</div>
<div class="t" style="left:1026px;top:99.69px;font-size:11px;line-height:11px;color:#aaa;letter-spacing:-0.054px;">Énfasis sutil</div>
<div class="t" style="left:1136px;top:62.84px;font-size:12px;line-height:12px;color:#444444;letter-spacing:-0.727px;">Buscar</div>
<div class="t" style="left:1136px;top:84.84px;font-size:12px;line-height:12px;color:#444444;letter-spacing:-0.770px;">Reemplazar</div>
<div class="t" style="left:1136px;top:106.84px;font-size:12px;line-height:12px;color:#444444;letter-spacing:-0.700px;">Seleccionar</div>
<div class="t" style="left:129.36px;top:147.88px;font-size:9px;line-height:9px;color:#555;">2</div>
<div class="t" style="left:164.93px;top:147.88px;font-size:9px;line-height:9px;color:#555;">1</div>
<div class="t" style="left:236.07px;top:147.88px;font-size:9px;line-height:9px;color:#555;">1</div>
<div class="t" style="left:271.64px;top:147.88px;font-size:9px;line-height:9px;color:#555;">2</div>
<div class="t" style="left:307.21000000000004px;top:147.88px;font-size:9px;line-height:9px;color:#555;">3</div>
<div class="t" style="left:342.78px;top:147.88px;font-size:9px;line-height:9px;color:#555;">4</div>
<div class="t" style="left:378.35px;top:147.88px;font-size:9px;line-height:9px;color:#555;">5</div>
<div class="t" style="left:413.92px;top:147.88px;font-size:9px;line-height:9px;color:#555;">6</div>
<div class="t" style="left:449.49px;top:147.88px;font-size:9px;line-height:9px;color:#555;">7</div>
<div class="t" style="left:485.06px;top:147.88px;font-size:9px;line-height:9px;color:#555;">8</div>
<div class="t" style="left:520.63px;top:147.88px;font-size:9px;line-height:9px;color:#555;">9</div>
<div class="t" style="left:553.7px;top:147.88px;font-size:9px;line-height:9px;color:#555;">10</div>
<div class="t" style="left:589.27px;top:147.88px;font-size:9px;line-height:9px;color:#555;letter-spacing:0.328px;">11</div>
<div class="t" style="left:624.84px;top:147.88px;font-size:9px;line-height:9px;color:#555;">12</div>
<div class="t" style="left:660.4100000000001px;top:147.88px;font-size:9px;line-height:9px;color:#555;">13</div>
<div class="t" style="left:695.98px;top:147.88px;font-size:9px;line-height:9px;color:#555;">14</div>
<div class="t" style="left:731.55px;top:147.88px;font-size:9px;line-height:9px;color:#555;">15</div>
<div class="t" style="left:767.12px;top:147.88px;font-size:9px;line-height:9px;color:#555;">16</div>
<div class="t" style="left:802.69px;top:147.88px;font-size:9px;line-height:9px;color:#555;">17</div>
<div class="t" style="left:838.26px;top:147.88px;font-size:9px;line-height:9px;color:#555;">18</div>
<div class="t" style="left:873.83px;top:147.88px;font-size:9px;line-height:9px;color:#555;">19</div>
<div class="t" style="left:909.4px;top:147.88px;font-size:9px;line-height:9px;color:#555;">20</div>
<div class="t" style="left:944.97px;top:147.88px;font-size:9px;line-height:9px;color:#555;">21</div>
<div class="t" style="left:980.54px;top:147.88px;font-size:9px;line-height:9px;color:#555;">22</div>
<div class="t" style="left:1016.11px;top:147.88px;font-size:9px;line-height:9px;color:#555;">23</div>
<div class="t" style="left:1051.68px;top:147.88px;font-size:9px;line-height:9px;color:#555;">24</div>
<div class="t" style="left:1087.25px;top:147.88px;font-size:9px;line-height:9px;color:#555;">25</div>
<div class="t" style="left:1122.8200000000002px;top:147.88px;font-size:9px;line-height:9px;color:#555;">26</div>
<div class="t" style="left:1158.3899999999999px;top:147.88px;font-size:9px;line-height:9px;color:#555;">27</div>
<div class="t" style="left:6px;top:668.69px;font-size:11px;line-height:11px;color:#555;letter-spacing:-0.276px;">Página 10 de 14</div>
<div class="t" style="left:100px;top:668.69px;font-size:11px;line-height:11px;color:#555;letter-spacing:-0.287px;">1667 palabras</div>
<div class="t" style="left:214px;top:668.69px;font-size:11px;line-height:11px;color:#555;letter-spacing:-0.312px;">Español (Perú)</div>
<div class="t" style="left:1248px;top:668.69px;font-size:11px;line-height:11px;color:#555;letter-spacing:-0.641px;">100 %</div>
<div class="t" style="left:1141px;top:698.69px;font-size:11px;line-height:11px;color:#fff;letter-spacing:-1.339px;">ESP</div>
<div class="t" style="left:1187px;top:690.69px;font-size:11px;line-height:11px;color:#fff;letter-spacing:0.094px;">02:22</div>
<div class="t" style="left:1173px;top:706.69px;font-size:11px;line-height:11px;color:#fff;letter-spacing:0.094px;">03\09\2018</div>
<div class="t" style="left:265.5px;top:165.96px;font-size:16px;line-height:16px;color:#111;letter-spacing:0.027px;">a= 25cm</div>
<div class="t" style="left:161px;top:265.76px;font-size:16px;line-height:16px;color:#111;letter-spacing:-0.033px;">b = 40cm</div>
<div class="t" style="left:205.6px;top:375.30px;font-size:13px;line-height:13px;color:#111;letter-spacing:-0.252px;">h piso (al) techo = 2.60 m</div>
<div class="t" style="left:205.6px;top:403.60px;font-size:13px;line-height:13px;color:#111;letter-spacing:-0.453px;">Ln = 2.60</div>
<div class="t" style="left:205.6px;top:432.00px;font-size:13px;line-height:13px;color:#111;letter-spacing:-0.480px;">a = 25cm</div>
<div class="t" style="left:205.6px;top:459.80px;font-size:13px;line-height:13px;color:#111;letter-spacing:-0.384px;">b = 40 cm</div>
<div class="t" style="left:205.6px;top:487.40px;font-size:13px;line-height:13px;color:#111;letter-spacing:-0.145px;">db = diámetro de la barra</div>
<div class="t" style="left:205.6px;top:515.70px;font-size:13px;line-height:13px;color:#111;font-weight:700;letter-spacing:-0.474px;">Total de estribos</div>
<div class="t" style="left:303.5px;top:515.70px;font-size:13px;line-height:13px;color:#111;letter-spacing:-0.086px;">= 18.5</div>
<div class="t" style="left:356.5px;top:514.94px;font-size:15px;line-height:15px;color:#111;font-family:'Liberation Serif',serif;letter-spacing:-0.850px;">19</div>
<div class="t" style="left:374.3px;top:514.94px;font-size:15px;line-height:15px;color:#111;font-family:'Liberation Serif',serif;font-style:italic;letter-spacing:0.273px;">estribos</div>
<div class="t" style="left:205.8px;top:542.00px;font-size:13px;line-height:13px;color:#111;letter-spacing:-0.109px;text-decoration:underline;">Por formula:</div>
<div class="t" style="left:205.8px;top:570.40px;font-size:13px;line-height:13px;color:#111;letter-spacing:-0.339px;">(n-1) = (19 -1) =</div>
<div class="t" style="left:295px;top:567.86px;font-size:16px;line-height:16px;color:#111;font-weight:700;letter-spacing:-0.453px;">18 estribos</div>
<div class="t" style="left:206px;top:600.46px;font-size:16px;line-height:16px;color:#111;letter-spacing:-0.102px;">Lectura:</div>
<div class="t" style="left:229.5px;top:636.45px;font-size:14px;line-height:14px;color:#d42a2a;">Ø</div>
<div class="t" style="left:243.8px;top:634.76px;font-size:16px;line-height:16px;color:#d42a2a;font-weight:700;letter-spacing:0.484px;">3/8”;</div>
<div class="t" style="left:286px;top:634.76px;font-size:16px;line-height:16px;color:#111;font-weight:700;letter-spacing:-0.299px;">1@ 0.05, @ S, resto @ S’ cada extremo</div>
<div class="t" style="left:408px;top:222.75px;font-size:13px;line-height:13px;color:#111;font-weight:700;letter-spacing:-0.516px;">Lo (Max) =</div>
<div class="t" style="left:445px;top:253.84px;font-size:15px;line-height:15px;color:#111;font-family:'Liberation Serif',serif;">=</div>
<div class="t" style="left:491px;top:253.84px;font-size:15px;line-height:15px;color:#111;font-family:'Liberation Serif',serif;letter-spacing:-0.078px;">= 0.43</div>
<div class="t" style="left:530px;top:253.84px;font-size:15px;line-height:15px;color:#111;font-family:'Liberation Serif',serif;font-style:italic;">m</div>
<div class="t" style="left:430.5px;top:277.00px;font-size:13px;line-height:13px;color:#111;letter-spacing:-0.265px;">Max (a, b) = (0.25 m, 0.40m) = 0.40m</div>
<div class="t" style="left:430.5px;top:295.70px;font-size:13px;line-height:13px;color:#111;letter-spacing:-0.389px;">15 cm = 0.15m</div>
<div class="t" style="left:408px;top:324.00px;font-size:13px;line-height:13px;color:#111;font-weight:700;letter-spacing:-0.503px;">S (Min) =</div>
<div class="t" style="left:430.5px;top:356.00px;font-size:13px;line-height:13px;color:#111;letter-spacing:0.516px;">Min</div>
<div class="t" style="left:455.5px;top:355.30px;font-size:15px;line-height:15px;color:#111;transform:scaleY(1.15);">(</div>
<div class="t" style="left:468px;top:358.11px;font-size:13px;line-height:13px;color:#111;font-family:'Liberation Serif',serif;font-style:italic;">,</div>
<div class="t" style="left:481px;top:355.30px;font-size:15px;line-height:15px;color:#111;transform:scaleY(1.15);">)</div>
<div class="t" style="left:489.5px;top:354.94px;font-size:15px;line-height:15px;color:#111;font-family:'Liberation Serif',serif;">=</div>
<div class="t" style="left:502px;top:355.30px;font-size:15px;line-height:15px;color:#111;transform:scaleY(1.15);">(</div>
<div class="t" style="left:534.5px;top:358.11px;font-size:13px;line-height:13px;color:#111;font-family:'Liberation Serif',serif;font-style:italic;">,</div>
<div class="t" style="left:570.6px;top:356.25px;font-size:13px;line-height:13px;color:#111;letter-spacing:-0.377px;">) = 12.5cm , 20cm</div>
<div class="t" style="left:430.5px;top:377.50px;font-size:13px;line-height:13px;color:#111;letter-spacing:-0.356px;">10 cm = 10 cm</div>
<div class="t" style="left:408px;top:406.30px;font-size:13px;line-height:13px;color:#111;font-weight:700;letter-spacing:-0.342px;">S’ (Min) =</div>
<div class="t" style="left:430.5px;top:436.00px;font-size:13px;line-height:13px;color:#111;letter-spacing:-0.357px;">16 db = 16 x 1.27 cm = 20.32 cm</div>
<div class="t" style="left:430.5px;top:454.70px;font-size:13px;line-height:13px;color:#111;letter-spacing:-0.282px;">Min (a, b) = 25cm, 40 cm = 25cm</div>
<div class="t" style="left:430.5px;top:473.00px;font-size:13px;line-height:13px;color:#111;letter-spacing:-0.433px;">30 cm = 30 cm</div>
<div class="t" style="left:681.6px;top:273.60px;font-size:13px;line-height:13px;color:#111;letter-spacing:-0.028px;">0.43m</div>
<div class="t" style="left:735.7px;top:273.60px;font-size:13px;line-height:13px;color:#111;letter-spacing:-0.328px;">0.45m</div>
<div class="t" style="left:715px;top:363.40px;font-size:13px;line-height:13px;color:#111;letter-spacing:-0.281px;">10 cm</div>
<div class="t" style="left:664.5px;top:452.00px;font-size:13px;line-height:13px;color:#111;letter-spacing:-0.186px;">20.32 cm</div>
<div class="t" style="left:737.5px;top:451.94px;font-size:15px;line-height:15px;color:#111;font-family:'Liberation Serif',serif;letter-spacing:-0.500px;">20</div>
<div class="t" style="left:755px;top:451.94px;font-size:15px;line-height:15px;color:#111;font-family:'Liberation Serif',serif;font-style:italic;letter-spacing:-0.250px;">cm</div>
<div class="t" style="left:851px;top:223.22px;font-size:19px;line-height:19px;color:#111;letter-spacing:0.651px;">0.45 m</div>
<div class="t" style="left:850.3px;top:613.22px;font-size:19px;line-height:19px;color:#111;letter-spacing:0.868px;">0.45 m</div>
<div class="t" style="left:1021.6px;top:172.56px;font-size:18px;line-height:18px;color:#111;letter-spacing:1.274px;">15 cm</div>
<div class="t" style="left:1021.6px;top:228.36px;font-size:18px;line-height:18px;color:#111;letter-spacing:1.274px;">10 cm</div>
<div class="t" style="left:1022.4px;top:332.36px;font-size:18px;line-height:18px;color:#111;letter-spacing:1.314px;">20 cm</div>
<div class="t" style="left:1021.6px;top:608.76px;font-size:18px;line-height:18px;color:#111;letter-spacing:1.214px;">10 cm</div>
<div class="t" style="left:791.8px;top:418.72px;font-size:19px;line-height:19px;color:#111;letter-spacing:0.734px;">2.6 m</div>
<div class="t" style="left:1108px;top:203.73px;font-size:8px;line-height:8px;color:#666;letter-spacing:0.664px;">5 cm</div>
<div class="t" style="left:1079px;top:644.23px;font-size:8px;line-height:8px;color:#666;letter-spacing:0.664px;">5 cm</div>
<div class="t" style="left:922px;top:439.96px;font-size:16px;line-height:16px;color:#111;">x</div>
<div class="t" style="left:993.5px;top:439.96px;font-size:16px;line-height:16px;color:#111;">x</div>
</body></html>
